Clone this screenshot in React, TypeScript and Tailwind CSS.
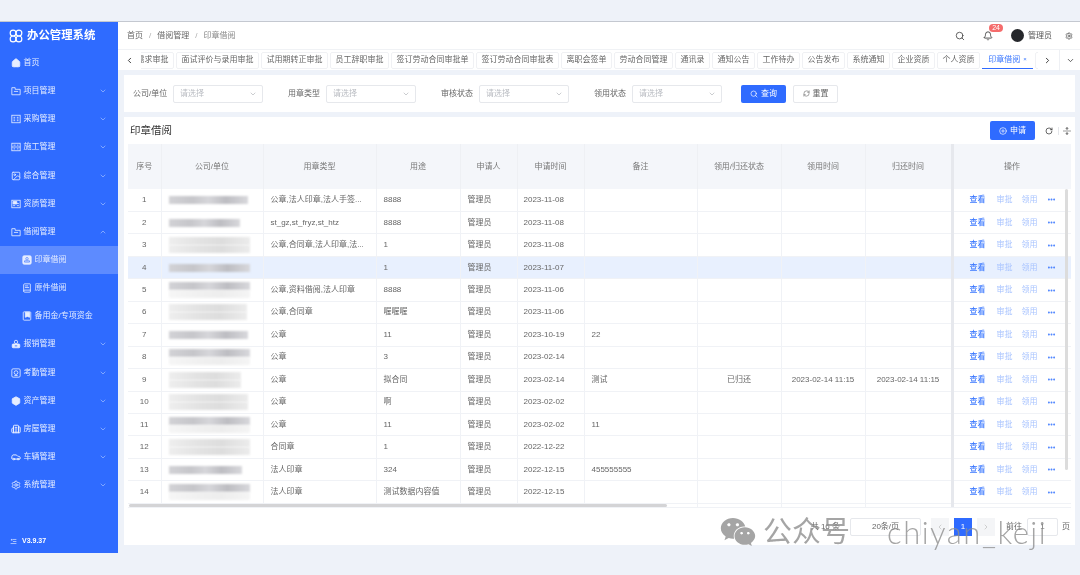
import React from "react";
import {
  Home, Image, BookText, Box, Building2, Car, Settings,
  ChevronDown, ChevronUp, ChevronLeft, ChevronRight, Search, Bell, RotateCw, RefreshCw, CirclePlus, Ellipsis, UnfoldVertical,
} from "lucide-react";
import { FaWeixin } from "react-icons/fa";

type IconProps = { className?: string; fill?: string; strokeWidth?: number };

function Svg({ className, children }: { className?: string; children: React.ReactNode }) {
  return (
    <svg viewBox="0 0 24 24" fill="none" stroke="currentColor" strokeWidth={2} className={className}>
      {children}
    </svg>
  );
}

const FolderIcon = ({ className }: IconProps) => (
  <Svg className={className}>
    <path d="M2 4h8v4h12v13H2z" />
    <path d="M7 13h10" />
  </Svg>
);
const ListIcon = ({ className }: IconProps) => (
  <Svg className={className}>
    <rect x="2" y="3" width="20" height="18" />
    <path d="M6 8h4M14 8h4M6 12h4M14 12h4M6 16h4M14 16h4" />
  </Svg>
);
const WorkIcon = ({ className }: IconProps) => (
  <Svg className={className}>
    <rect x="2" y="3" width="20" height="18" />
    <path d="M2 12h20M6 7.500h5M14 7.500h4M6 16.500h4M14 16.500h4" />
  </Svg>
);
const QualifyIcon = ({ className }: IconProps) => (
  <Svg className={className}>
    <rect x="2" y="3" width="20" height="18" />
    <path d="M5 6h9v6H5z" fill="currentColor" />
    <path d="M5 16h5M14 11h5M14 16h5" />
  </Svg>
);
const SealIcon = ({ className }: IconProps) => (
  <Svg className={className}>
    <rect x="2" y="2" width="20" height="20" rx="3" fill="currentColor" />
    <circle cx="12" cy="9" r="3" stroke="#5d8bff" />
    <path d="M6 17h12v-3H6z" stroke="#5d8bff" />
  </Svg>
);
const CashIcon = ({ className }: IconProps) => (
  <Svg className={className}>
    <rect x="3" y="2" width="18" height="20" rx="2" />
    <path d="M8 3h10v12l-5-2-5 2z" fill="currentColor" />
  </Svg>
);
const BagIcon = ({ className }: IconProps) => (
  <Svg className={className}>
    <circle cx="12" cy="7" r="4" />
    <rect x="3" y="12" width="18" height="9" rx="2" fill="currentColor" />
    <path d="M9 16.500h6" stroke="#2f6bff" />
  </Svg>
);
const AttendIcon = ({ className }: IconProps) => (
  <Svg className={className}>
    <rect x="2" y="2" width="20" height="20" rx="3" />
    <circle cx="12" cy="11" r="4.500" />
    <path d="M8 18h8" />
  </Svg>
);
const VersionIcon = ({ className }: IconProps) => (
  <Svg className={className}>
    <path d="M10 5h12M10 12h12M2 19h20M6 3v6M3 6h6" />
  </Svg>
);
const Logo = ({ className }: IconProps) => (
  <Svg className={className}>
    <circle cx="7" cy="7" r="5" />
    <circle cx="17" cy="7" r="5" />
    <circle cx="7" cy="17" r="5" />
    <circle cx="17" cy="17" r="5" />
  </Svg>
);
const FilledBox = ({ className }: IconProps) => <Box className={className} fill="currentColor" stroke="currentColor" />;
const FilledBuilding = ({ className }: IconProps) => <Building2 className={className} strokeWidth={2.4} />;
const FilledCar = ({ className }: IconProps) => <Car className={className} strokeWidth={2.4} />;

const menus: { name: string; icon: React.ComponentType<IconProps>; fill?: boolean; arrow?: boolean; open?: boolean; sub?: boolean; active?: boolean }[] = [
  { name: "首页", icon: Home, fill: true },
  { name: "项目管理", icon: FolderIcon, arrow: true },
  { name: "采购管理", icon: ListIcon, arrow: true },
  { name: "施工管理", icon: WorkIcon, arrow: true },
  { name: "综合管理", icon: Image, arrow: true },
  { name: "资质管理", icon: QualifyIcon, arrow: true },
  { name: "借阅管理", icon: FolderIcon, open: true },
  { name: "印章借阅", icon: SealIcon, sub: true, active: true },
  { name: "原件借阅", icon: BookText, sub: true },
  { name: "备用金/专项资金", icon: CashIcon, sub: true },
  { name: "报销管理", icon: BagIcon, arrow: true },
  { name: "考勤管理", icon: AttendIcon, arrow: true },
  { name: "资产管理", icon: FilledBox, arrow: true },
  { name: "房屋管理", icon: FilledBuilding, arrow: true },
  { name: "车辆管理", icon: FilledCar, arrow: true },
  { name: "系统管理", icon: Settings, arrow: true },
];

const tabs = ["需求审批", "面试评价与录用审批", "试用期转正审批", "员工辞职审批", "签订劳动合同审批单", "签订劳动合同审批表", "离职会签单", "劳动合同管理", "通讯录", "通知公告", "工作待办", "公告发布", "系统通知", "企业资质", "个人资质"];

const filters = ["公司/单位", "用章类型", "审核状态", "领用状态"];

// blur: a = one dark line, b = dark line with pale line under it, c = two pale lines
const rows = [
  { blur: "a", w: "w-[79px]", type: "公章,法人印章,法人手签...", use: "8888", date: "2023-11-08" },
  { blur: "a", w: "w-[71px]", type: "st_gz,st_fryz,st_htz", use: "8888", date: "2023-11-08" },
  { blur: "c", w: "w-[81px]", type: "公章,合同章,法人印章,法...", use: "1", date: "2023-11-08" },
  { blur: "a", w: "w-[81px]", type: "", use: "1", date: "2023-11-07" },
  { blur: "b", w: "w-[81px]", type: "公章,资料借阅,法人印章", use: "8888", date: "2023-11-06" },
  { blur: "c", w: "w-[78px]", type: "公章,合同章", use: "喔喔喔", date: "2023-11-06" },
  { blur: "a", w: "w-[79px]", type: "公章", use: "11", date: "2023-10-19", note: "22" },
  { blur: "b", w: "w-[81px]", type: "公章", use: "3", date: "2023-02-14" },
  { blur: "c", w: "w-[72px]", type: "公章", use: "拟合同", date: "2023-02-14", note: "测试", state: "已归还", t1: "2023-02-14 11:15", t2: "2023-02-14 11:15" },
  { blur: "c", w: "w-[79px]", type: "公章", use: "啊", date: "2023-02-02" },
  { blur: "b", w: "w-[81px]", type: "公章", use: "11", date: "2023-02-02", note: "11" },
  { blur: "c", w: "w-[81px]", type: "合同章", use: "1", date: "2022-12-22" },
  { blur: "a", w: "w-[73px]", type: "法人印章", use: "324", date: "2022-12-15", note: "455555555" },
  { blur: "b", w: "w-[81px]", type: "法人印章", use: "测试数据内容值", date: "2022-12-15" },
  { blur: "c", w: "w-[81px]", type: "法人印章", use: "1", date: "2022-12-15" },
];

function Masked({ blur, w }: { blur: string; w: string }) {
  const dark = "h-[8px] bg-[linear-gradient(90deg,#d2d2d6,#c6c6ca_30%,#d6d6da_50%,#bdbdc2_72%,#d8d8dc)] blur-[0.8px]";
  const pale = "h-[8px] bg-[linear-gradient(90deg,#eeeeee,#e2e2e2_40%,#dddddd_65%,#ececec)] blur-[0.8px]";
  return (
    <div className={`${w} flex flex-col`}>
      {blur === "a" && <div className={dark} />}
      {blur === "b" && (
        <>
          <div className={dark} />
          <div className={`${pale} opacity-50`} />
        </>
      )}
      {blur === "c" && (
        <>
          <div className={pale} />
          <div className={pale} />
        </>
      )}
    </div>
  );
}

function Select({ label }: { label: string }) {
  return (
    <div className="flex items-center gap-[6px]">
      <span className="w-[34px] whitespace-nowrap text-right text-[8px] leading-none text-[#666]">{label}</span>
      <div className="flex h-[18px] w-[90px] items-center justify-between rounded-[2px] border border-[#e6e8ec] pl-[6px] pr-[5px] text-[8px] text-[#b9bcc2]">
        请选择
        <ChevronDown className="h-[8px] w-[8px] text-[#b0b3b8]" />
      </div>
    </div>
  );
}

const th = "border-r border-[#eef0f4] font-normal text-[8px] text-[#777]";
const td = "border-r border-b border-[#f0f2f6] px-[7px] text-[8px] text-[#666] whitespace-nowrap overflow-hidden";

export default function App() {
  return (
    <div className="relative h-[575px] w-[1080px] overflow-hidden bg-[#eef2f9] pb-[22px] pt-[21px] font-['Liberation_Sans','Noto_Sans_CJK_SC',sans-serif] blur-[0.45px]">
      <div className="flex h-full border-t border-[#c4c8d0]">
        {/* sidebar */}
        <aside className="flex w-[118px] shrink-0 flex-col bg-[#2f6bff] text-white">
          <div className="flex h-[27px] items-center gap-[4px] pl-[9px]">
            <Logo className="h-[14px] w-[14px]" />
            <span className="text-[11.4px] font-bold leading-none">办公管理系统</span>
          </div>
          {menus.map((m) => (
            <div key={m.name} className={`flex h-[28.15px] items-center justify-between pr-[11px] ${m.sub ? "pl-[22px]" : "pl-[11px]"} ${m.active ? "bg-[#5d8bff]" : ""}`}>
              <span className="flex items-center gap-[2.5px] whitespace-nowrap text-[8px] leading-none text-[#e6edff]">
                <m.icon className="h-[10px] w-[10px]" fill={m.fill ? "currentColor" : "none"} strokeWidth={2} />
                {m.name}
              </span>
              {m.arrow && <ChevronDown className="h-[8px] w-[8px] text-[#a9c4ff]" />}
              {m.open && <ChevronUp className="h-[8px] w-[8px] text-[#a9c4ff]" />}
            </div>
          ))}
          <div className="mt-auto flex h-[24px] items-center gap-[5px] pl-[10px] text-[7px] font-bold">
            <VersionIcon className="h-[7px] w-[7px]" />
            V3.9.37
          </div>
        </aside>

        <main className="flex min-w-0 flex-1 flex-col">
          {/* breadcrumb bar */}
          <header className="flex h-[27px] items-center justify-between bg-white pl-[9px] pr-[7px] text-[8px] text-[#666]">
            <div className="flex items-center gap-[6px]">
              <span>首页</span><span className="text-[#aaa]">/</span>
              <span>借阅管理</span><span className="text-[#aaa]">/</span>
              <span className="text-[#888]">印章借阅</span>
            </div>
            <div className="flex items-center">
              <Search className="h-[10px] w-[10px] text-[#444]" />
              <div className="relative ml-[18px]">
                <Bell className="h-[10px] w-[10px] text-[#333]" />
                <span className="absolute -right-[10px] -top-[7px] rounded-full bg-[#f56c6c] px-[3px] text-[7px] leading-[8px] text-white">24</span>
              </div>
              <div className="ml-[18px] h-[13px] w-[13px] rounded-full bg-[#26282c]" />
              <span className="ml-[4px] text-[#555]">管理员</span>
              <Settings className="ml-[13px] h-[8px] w-[8px] text-[#444]" />
            </div>
          </header>

          {/* tabs */}
          <div className="flex h-[21px] items-center border-t border-[#f0f2f5] bg-white">
            <div className="flex w-[23px] shrink-0 justify-center">
              <ChevronLeft className="h-[9px] w-[9px] text-[#333]" strokeWidth={2.5} />
            </div>
            <div className="flex w-[897px] shrink-0 items-center overflow-hidden">
              <div className="-ml-[10px] flex items-center gap-[2px]">
                {tabs.map((t) => (
                  <div key={t} className="flex h-[17px] shrink-0 items-center whitespace-nowrap rounded-[2px] border border-[#f0f1f4] px-[4.5px] text-[8px] text-[#666]">{t}</div>
                ))}
                <div className="flex h-[17px] w-[51px] shrink-0 items-center justify-center gap-[3px] whitespace-nowrap border-b border-[#2f6bff] text-[8px] text-[#3b78ff]">
                  印章借阅<span className="text-[6px]">×</span>
                </div>
                <div className="h-[17px] w-[30px] shrink-0 rounded-[2px] border border-[#f0f1f4]" />
              </div>
            </div>
            <div className="flex flex-1 items-center justify-end">
              <ChevronRight className="mr-[7px] h-[9px] w-[9px] text-[#333]" strokeWidth={2.5} />
              <div className="flex h-[21px] w-[21px] items-center justify-center border-l border-[#eef0f4]">
                <ChevronDown className="h-[9px] w-[9px] text-[#444]" strokeWidth={2.2} />
              </div>
            </div>
          </div>

          {/* filters */}
          <div className="ml-[6px] mr-[5px] mt-[5px] flex h-[37px] shrink-0 items-center bg-white pl-[9px]">
            <div className="flex gap-[23px]">
              {filters.map((f) => <Select key={f} label={f} />)}
            </div>
            <button className="ml-[19px] flex h-[18px] w-[45px] items-center justify-center gap-[3px] rounded-[2px] bg-[#2f6bff] text-[8px] text-white">
              <Search className="h-[8px] w-[8px]" />查询
            </button>
            <button className="ml-[7px] flex h-[18px] w-[45px] items-center justify-center gap-[3px] rounded-[2px] border border-[#e6e8ec] text-[8px] text-[#666]">
              <RefreshCw className="h-[7px] w-[7px]" />重置
            </button>
          </div>

          {/* table card */}
          <section className="mb-[8px] ml-[6px] mr-[5px] mt-[5px] flex flex-1 flex-col bg-white px-[4px]">
            <div className="flex h-[27px] shrink-0 items-center justify-between pl-[2px]">
              <span className="text-[10.5px] text-[#333]">印章借阅</span>
              <div className="flex items-center">
                <button className="flex h-[19px] w-[45px] items-center justify-center gap-[3px] rounded-[2px] bg-[#2f6bff] text-[8px] text-white">
                  <CirclePlus className="h-[8px] w-[8px]" />申请
                </button>
                <RotateCw className="ml-[10px] h-[8px] w-[8px] text-[#333]" strokeWidth={2.2} />
                <span className="ml-[5px] h-[8px] w-px bg-[#e4e6ea]" />
                <UnfoldVertical className="ml-[4px] h-[8px] w-[8px] text-[#333]" />
              </div>
            </div>
            <div className="relative h-[364px] shrink-0 overflow-hidden border-b border-[#f0f2f6]">
              <table className="w-[943px] table-fixed border-collapse">
                <colgroup>
                  <col className="w-[33px]" /><col className="w-[102px]" /><col className="w-[113px]" /><col className="w-[84px]" />
                  <col className="w-[57px]" /><col className="w-[67px]" /><col className="w-[113px]" /><col className="w-[84px]" />
                  <col className="w-[84px]" /><col className="w-[87px]" /><col className="w-[119px]" />
                </colgroup>
                <thead>
                  <tr className="h-[45px] bg-[#f4f6fa]">
                    {["序号", "公司/单位", "用章类型", "用途", "申请人", "申请时间", "备注", "领用/归还状态", "领用时间", "归还时间"].map((h) => (
                      <th key={h} className={th}>{h}</th>
                    ))}
                    <th className={`${th} border-l-[3px] border-l-[#e6e8ed]`}>操作</th>
                  </tr>
                </thead>
                <tbody>
                  {rows.map((r, i) => (
                    <tr key={i} className={`h-[22.46px] ${i === 3 ? "bg-[#e8f0fe]" : "bg-white"}`}>
                      <td className={`${td} text-center`}>{i + 1}</td>
                      <td className={td}><Masked blur={r.blur} w={r.w} /></td>
                      <td className={td}>{r.type}</td>
                      <td className={td}>{r.use}</td>
                      <td className={td}>管理员</td>
                      <td className={`${td} pl-[6px]`}>{r.date}</td>
                      <td className={td}>{r.note}</td>
                      <td className={`${td} text-center`}>{r.state}</td>
                      <td className={`${td} text-center`}>{r.t1}</td>
                      <td className={`${td} text-center`}>{r.t2}</td>
                      <td className={`${td} border-l-[3px] border-l-[#e6e8ed] pl-[14px]`}>
                        <div className="ml-[2px] flex items-center gap-[11px]">
                          <span className="font-medium text-[#3b78ff]">查看</span>
                          <span className="text-[#a9c4ff]">审批</span>
                          <span className="-ml-[2px] text-[#a9c4ff]">领用</span>
                          <Ellipsis className="-ml-[2px] h-[9px] w-[9px] text-[#3b78ff]" strokeWidth={3} />
                        </div>
                      </td>
                    </tr>
                  ))}
                </tbody>
              </table>
              {/* scrollbars */}
              <div className="absolute right-[3px] top-[45px] h-[281px] w-[3px] rounded-full bg-[#dcdcdc]" />
              <div className="absolute bottom-0 left-[1px] h-[3px] w-[538px] rounded-full bg-[#d4d4d6]" />
            </div>
            {/* pagination */}
            <div className="flex flex-1 items-center justify-end gap-[5px] pr-[1px] text-[8px] text-[#666]">
              <span className="mr-[5px]">共 16 条</span>
              <div className="flex h-[18px] w-[71px] items-center justify-center rounded-[2px] border border-[#e6e8ec]">20条/页</div>
              <div className="ml-[5px] flex h-[18px] w-[18px] items-center justify-center bg-[#f4f5f7] text-[#bbb]"><ChevronLeft className="h-[8px] w-[8px]" /></div>
              <div className="flex h-[18px] w-[18px] items-center justify-center bg-[#2f6bff] font-medium text-white">1</div>
              <div className="flex h-[18px] w-[18px] items-center justify-center bg-[#f4f5f7] text-[#bbb]"><ChevronRight className="h-[8px] w-[8px]" /></div>
              <span className="ml-[6px]">前往</span>
              <div className="flex h-[18px] w-[31px] items-center justify-center rounded-[2px] border border-[#e6e8ec]">1</div>
              <span className="-ml-[1px]">页</span>
            </div>
          </section>
        </main>
      </div>

      {/* watermark */}
      <div className="absolute left-[720px] top-[514px] flex items-center text-[#8f8f8f] opacity-80">
        <FaWeixin className="h-[36px] w-[36px]" />
        <span className="ml-[7px] text-[29px] leading-[36px]">公众号</span>
        <span className="ml-[37px] font-['Lato',sans-serif] text-[31px] font-light leading-[36px] tracking-[1.5px]">chiyan_keji</span>
      </div>
    </div>
  );
}
